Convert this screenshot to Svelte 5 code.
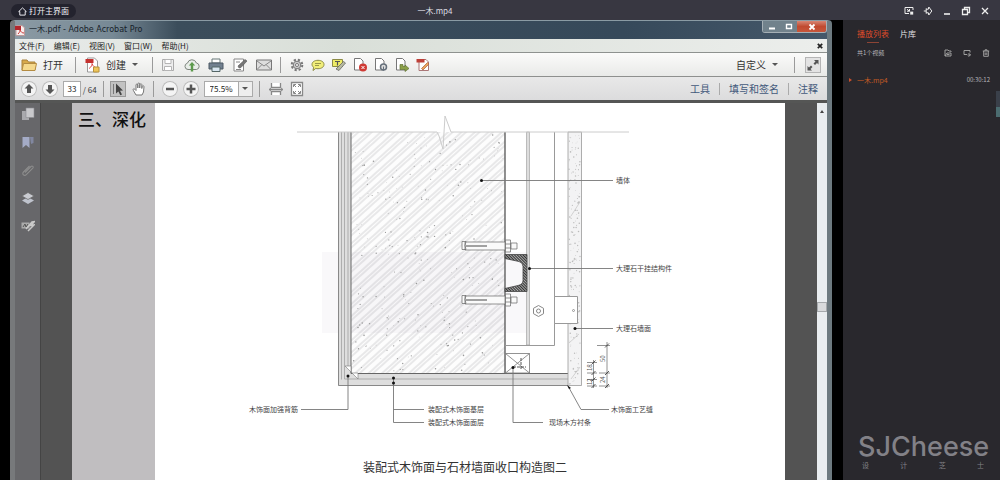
<!--
  Video player playing a recorded PDF walkthrough, with the playlist on the right
-->

<script lang="ts">
  const menus = ['文件(F)', '编辑(E)', '视图(V)', '窗口(W)', '帮助(H)'];

  let pageNumber = '33';
  let zoomLevel = '75.5%';

  // Repeatable noise for the concrete and stone fills
  function speckle(count: number, x: number, y: number, w: number, h: number, start: number) {
    let seed = start;
    const next = () => {
      seed = (seed * 16807) % 2147483647;
      return seed / 2147483647;
    };
    return Array.from({ length: count }, () => ({
      x: x + next() * w,
      y: y + next() * h,
      r: 0.3 + next() * 0.5
    }));
  }

  const wallDots = speckle(260, 353, 134, 150, 237, 4711);
  const stoneDots = speckle(170, 569, 134, 11, 250, 977);
  const bolts = [0, 54];

  const labels = [
    { x: 616, y: 183, text: '墙体' },
    { x: 616, y: 271, text: '大理石干挂结构件' },
    { x: 616, y: 331, text: '大理石墙面' },
    { x: 249, y: 412, text: '木饰面加强背筋' },
    { x: 428, y: 412, text: '装配式木饰面基层' },
    { x: 428, y: 425, text: '装配式木饰面面层' },
    { x: 549, y: 425, text: '现场木方衬条' },
    { x: 611, y: 412, text: '木饰面工艺缝' }
  ];
</script>

<div class="player">
  <header class="topbar">
    <div class="topbar-main">
      <button class="home-btn">
        <svg width="9" height="9" viewBox="0 0 9 9"><path d="M.7 4.6 4.5.9l3.8 3.7H7.2v3.5H1.8V4.6z" fill="none" stroke="#e8e8ee" /></svg>
        打开主界面
      </button>
      <span class="video-title">一木.mp4</span>
    </div>
    <div class="topbar-actions">
      <button aria-label="Mini player">
        <svg viewBox="0 0 10 10"><path d="M9 4V1.5H1v6h4M3 3.2l2.4 2M5.5 3v2.2H3" /><path d="M6.2 5.6h3v3h-3z" fill="#eee" stroke="none" /></svg>
      </button>
      <button aria-label="Pin">
        <svg viewBox="0 0 10 10"><path d="M.8 5h2.400M3.200 2.400v5.200M3.200 3.200h2.200L5.800 1l3 4-3 4-.4-2.200H3.200" /></svg>
      </button>
      <button aria-label="Minimize">
        <svg viewBox="0 0 10 10"><path d="M2 8h6" stroke-width="1.6" /></svg>
      </button>
      <button aria-label="Restore">
        <svg viewBox="0 0 10 10"><path d="M1.5 3.5h5v5h-5zM3.5 3V1.5h5v5H7" stroke-width="1.3" /></svg>
      </button>
      <button aria-label="Close">
        <svg viewBox="0 0 10 10"><path d="m2 2 6 6M8 2 2 8" stroke-width="1.3" /></svg>
      </button>
    </div>
  </header>

  <div class="content">
    <main class="stage">
      <div class="window">
        <div class="titlebar">
          <svg width="10" height="11" viewBox="0 0 10 11"><path d="M1 .5h6l2.5 2.3v7.7H1z" fill="#f7eeee" stroke="#b99" /><path d="M0 1h6v4H0z" fill="#b3262c" /><path d="M3 9c2-2 2-3 2-4 1 2 2 3 4 3" fill="none" stroke="#c33" /></svg>
          <span class="titlebar-text">一木.pdf - Adobe Acrobat Pro</span>
          <div class="window-btns">
            <button class="win-min" aria-label="Minimize window"><svg width="8" height="8" viewBox="0 0 8 8"><path d="M1 5.5h6" stroke="#fff" stroke-width="2" /></svg></button>
            <button class="win-max" aria-label="Maximize window"><svg width="8" height="8" viewBox="0 0 8 8"><path d="M1.5 1.5h5v4h-5z" fill="none" stroke="#fff" stroke-width="1.4" /></svg></button>
            <button class="win-close" aria-label="Close window"><svg width="8" height="8" viewBox="0 0 8 8"><path d="m1.5 1.5 5 5m0-5-5 5" stroke="#fff" stroke-width="1.8" /></svg></button>
          </div>
        </div>

        <nav class="menubar">
          {#each menus as menu}
            <button>{menu}</button>
          {/each}
          <button class="doc-close" aria-label="Close document"><svg width="6" height="6" viewBox="0 0 6 6"><path d="m.8.8 4.4 4.4m0-4.4L.8 5.2" stroke="#222" stroke-width="1.7" /></svg></button>
        </nav>

        <!-- File tools -->
        <div class="toolbar">
          <div class="group open-group">
            <button class="text-btn">
              <svg width="16" height="14" viewBox="0 0 16 14"><path d="M1 12V2h5l1.5 2H14v8z" fill="#d7a94a" stroke="#a9823b" /><path d="m1 12.5 1.5-7h13l-1.5 7z" fill="#f5d98c" stroke="#b48c42" /></svg>
              打开
            </button>
          </div>
          <div class="group create-group">
            <button class="text-btn">
              <svg width="15" height="15" viewBox="0 0 15 15"><path d="M2.5.5h7l3 3v11h-10z" fill="#fff" stroke="#999" /><path d="M.5 1.5h8v4h-8z" fill="#c5322f" /><path d="M4 11c3-2 3-4 3-5 1 3 3 4 4 4" fill="none" stroke="#d44" /><path d="M8.5 9.5H14v5H8.500z" fill="#eec65a" stroke="#b8923b" /></svg>
              创建
              <span class="caret"></span>
            </button>
          </div>
          <div class="group file-group">
            <button aria-label="Save"><svg viewBox="0 0 16 16"><path d="M2.5 2.5h11v11h-11z" fill="#eee" stroke="#aaa" /><path d="M5 2.5h6v4H5zM4.5 9.5h7v4h-7z" fill="#fff" stroke="#b5b5b5" /></svg></button>
            <button aria-label="Upload"><svg viewBox="0 0 16 16"><path d="M4 12.5a3.2 3.2 0 0 1-.6-6.300 4.700 4.700 0 0 1 9-.2 3.300 3.300 0 0 1 .1 6.500z" fill="#e8ede8" stroke="#7d857d" /><path d="M8 5 4.8 8.5h2v6h2.400v-6h2z" fill="#5c9a4c" /></svg></button>
            <button aria-label="Print"><svg viewBox="0 0 16 16"><path d="M4 2h8v4H4z" fill="#fff" stroke="#677" /><path d="M1 6h14v6H1z" fill="#71808f" stroke="#4d5965" /><path d="M4 10h8v4.5H4z" fill="#d9e6f0" stroke="#566" /></svg></button>
            <button aria-label="Sign"><svg viewBox="0 0 16 16"><path d="M2 2h9.5v12H2z" fill="#fff" stroke="#888" /><path d="m6 9 1 2 2-.5L15 4l-2-1.500z" fill="#777" stroke="#555" stroke-width=".6" /><path d="M4 12.5h5M4 5h4" stroke="#888" /></svg></button>
            <button aria-label="Mail"><svg viewBox="0 0 16 16"><path d="M.5 3h15v10H.5z" fill="#ddd" stroke="#777" /><path d="m1 4 7 5 7-5M1 12.5l5-5m9 5-5-5" fill="none" stroke="#888" /></svg></button>
          </div>
          <div class="group edit-group">
            <button aria-label="Settings"><svg viewBox="0 0 16 16"><circle cx="8" cy="8" r="5.3" fill="none" stroke="#777" stroke-width="2" stroke-dasharray="2.2 2" /><circle cx="8" cy="8" r="3.8" fill="#ccc" stroke="#777" /><circle cx="8" cy="8" r="1.5" fill="#fff" stroke="#777" /></svg></button>
            <button aria-label="Comment"><svg viewBox="0 0 16 16"><path d="M8 3.300c3.500 0 6 1.700 6 4.200s-2.500 4.200-6 4.200c-.8 0-1.500 0-2.200-.3L3 13.500l.6-3.200C2.500 9.500 2 8.500 2 7.500c0-2.500 2.500-4.200 6-4.200z" fill="#f1ee79" stroke="#8b8a45" /><path d="M5 6.5h6M5 8.5h4" stroke="#9a984a" /></svg></button>
            <button aria-label="Highlight"><svg viewBox="0 0 16 16"><path d="M1.5 2.5h10v7h-10z" fill="#eeeb66" stroke="#8b8a45" /><path d="M4 4.5h5M6.5 4.5v4" stroke="#555" stroke-width="1.2" /><path d="m5 12 3 1.5L14.500 6l-2-1.500z" fill="#b8bba0" stroke="#666" stroke-width=".8" /></svg></button>
            <button aria-label="Delete page"><svg viewBox="0 0 16 16"><path d="M2.5 1.5h6L11 4v9H2.500z" fill="#fff" stroke="#777" /><circle cx="11" cy="10.5" r="4" fill="#cf3a34" /><path d="m9.5 9 3 3m0-3-3 3" stroke="#fff" /></svg></button>
            <button aria-label="Rotate page"><svg viewBox="0 0 16 16"><path d="M2.5 1.5h6L11 4v9H2.500z" fill="#fff" stroke="#777" /><circle cx="10.5" cy="10" r="3" fill="#ddd" stroke="#66717c" stroke-width="1.5" /><path d="M10.5 9.5v4" stroke="#66717c" /></svg></button>
            <button aria-label="Extract page"><svg viewBox="0 0 16 16"><path d="M2.5 1.5h6L11 4v9H2.500z" fill="#fff" stroke="#777" /><path d="M6 7.5h3v2h2V8l4 3.500-4 3v-2H6z" fill="#8a9f48" stroke="#627334" stroke-width=".7" /></svg></button>
            <button aria-label="Edit PDF"><svg viewBox="0 0 16 16"><path d="M4 2.5h7L13.500 5v8.500H4z" fill="#fff" stroke="#a77" /><path d="M1.5 2h8v3.500h-8z" fill="#be4038" /><path d="m6.500 11.500 6-6L14 7l-6 6z" fill="#eba35b" stroke="#a65d3c" stroke-width=".7" /></svg></button>
          </div>
          <div class="group custom-group">
            <button class="text-btn">自定义 <span class="caret"></span></button>
          </div>
          <button class="expand-btn" aria-label="Expand"><svg width="14" height="14" viewBox="0 0 14 14"><path d="M8 2h4.500v4.500L11 5 9 7 7.500 5.500l2-2zM6 12.500H1.500V8L3 9.500l2-2L6.500 9l-2 2z" fill="#555" /></svg></button>
        </div>

        <!-- Page tools -->
        <div class="toolbar page-tools">
          <div class="group pager-group">
            <button class="round" aria-label="Previous page"><svg viewBox="0 0 16 16"><path d="m8 3 4.500 4.500H10V12H6V7.500H3.500z" fill="#555" /></svg></button>
            <button class="round" aria-label="Next page"><svg viewBox="0 0 16 16"><path d="m8 13 4.500-4.500H10V4H6v4.500H3.500z" fill="#555" /></svg></button>
            <label class="pager"><input bind:value={pageNumber} aria-label="Page" /> / 64</label>
          </div>
          <div class="group cursor-group">
            <button class="selected" aria-label="Select"><svg viewBox="0 0 16 16"><path d="M3.5 3v10" stroke="#777" /><path d="m6 2.500 7 7-3 .2 2 3.800-1.700.8-1.900-3.800L6 12.500z" fill="#444" /></svg></button>
            <button aria-label="Hand"><svg viewBox="0 0 16 16"><path d="M5 14 2.300 9.300C1.500 8 3 7.300 4 8.500l1 1V4c0-1.300 1.800-1.300 1.800 0v3-4c0-1.300 1.900-1.300 1.900 0v4l.3-3.300c.1-1.300 1.900-1.200 1.800 0V7.500l.4-2c.3-1.200 2-.9 1.800.3L12.500 11 11 14z" fill="#fff" stroke="#777" /></svg></button>
          </div>
          <div class="group zoom-group">
            <button class="round" aria-label="Zoom out"><svg viewBox="0 0 16 16"><path d="M4 8h8" stroke="#555" stroke-width="2.5" /></svg></button>
            <button class="round" aria-label="Zoom in"><svg viewBox="0 0 16 16"><path d="M3.5 8h9M8 3.5v9" stroke="#555" stroke-width="2.5" /></svg></button>
            <div class="zoom-box">
              <select bind:value={zoomLevel} aria-label="Zoom level">
                <option>75.5%</option>
                <option>100%</option>
              </select>
              <span class="zoom-arrow"><span class="caret"></span></span>
            </div>
          </div>
          <div class="group fit-group">
            <button aria-label="Fit width"><svg viewBox="0 0 16 16"><path d="M3.5 2v4.500h9V2M3.500 14v-3.500h9V14" fill="#fff" stroke="#888" stroke-width="1.3" /><path d="M1 8.5h14M3 7 1 8.500 3 10m10-3 2 1.500-2 1.500" fill="none" stroke="#888" /></svg></button>
            <button aria-label="Fit page"><svg viewBox="0 0 16 16"><path d="M2.5 1.5h11v13h-11z" fill="#fff" stroke="#888" stroke-width="1.3" /><path d="M4.5 6V3.500H7M9 3.500h2.500V6M11.500 10v2.500H9M7 12.500H4.500V10M5 4l2 2m4-2L9 6m2 6-2-2m-4 2 2-2" fill="none" stroke="#888" /></svg></button>
          </div>
          <div class="panels">
            <button>工具</button>
            <button>填写和签名</button>
            <button>注释</button>
          </div>
        </div>

        <div class="document">
          <div class="navpane">
            <button aria-label="Thumbnails"><svg viewBox="0 0 14 14"><path d="M1 4h7v9H1z" fill="#a9a9ad" /><path d="M5 1h8v9.500H5z" fill="#c9c9cc" stroke="#8c8c90" stroke-width=".6" /></svg></button>
            <button aria-label="Bookmarks"><svg viewBox="0 0 14 14"><path d="M1.5 2h7v11L5 10l-3.500 3z" fill="#a4abc6" /><path d="M9 2h3.500v6L10 9z" fill="#8187a0" /></svg></button>
            <button aria-label="Attachments"><svg viewBox="0 0 14 14"><path d="M4 9.500 10 3.500c1.200-1.200 3 .3 1.800 1.600l-6.500 6.500c-2 2-4.800-.6-2.800-2.600L8.500 3" fill="none" stroke="#8d8d8d" stroke-width="1.1" /></svg></button>
            <button aria-label="Layers"><svg viewBox="0 0 14 14"><path d="m7 6 6 3.500-6 3.500-6-3.500z" fill="#bfc3cd" /><path d="m7 1.500 6 3.500-6 3.500L1 5z" fill="#c9cbd1" stroke="#666" stroke-width=".7" /></svg></button>
            <button aria-label="Signatures"><svg viewBox="0 0 14 14"><path d="M.5 3.500h8v6h-8z" fill="#aaa" /><path d="m5 10 6-7 2.500-.5L10 6.500l3-.5-6 6" fill="none" stroke="#c9c9c9" stroke-width="1.5" /><path d="m2 8 2-3 1 3 2-3" fill="none" stroke="#555" /></svg></button>
          </div>
          <article class="page">
            <h1>三、深化</h1>
            <svg class="drawing" viewBox="155 103 630 377">
              <defs>
                <pattern id="hatch" width="9" height="9" patternUnits="userSpaceOnUse" patternTransform="rotate(-42)">
                  <path d="M0 2h9M0 5h9" stroke="#c9c9cc" stroke-width=".8" />
                </pattern>
                <pattern id="steel" width="2" height="2" patternUnits="userSpaceOnUse" patternTransform="rotate(45)">
                  <path fill="#aaa" d="M0 0h2v2H0z" /><path d="M0 .5h2" stroke="#333" />
                </pattern>
              </defs>

              <!-- Concrete wall -->
              <path d="M351 132h154v241H351z" fill="#fdfdfd" />
              <path d="M351 132h154v241H351z" fill="url(#hatch)" />
              <path d="M322 252h208v81H322z" fill="#8b6f9b" opacity=".05" />
              {#each wallDots as dot}
                <circle cx={dot.x} cy={dot.y} r={dot.r} fill="#999" />
              {/each}

              <!-- Wood panel layers -->
              <path d="M338 132h13v241h217v13H338z" fill="#dedede" />
              <g class="line">
                <path d="M338.5 132v253.500H568" stroke="#888" />
                <path d="M341.5 132v247.500M344.500 132v247H568M348 132v236" stroke="#999" stroke-width=".7" />
                <path d="M351 132v241.500h217" stroke="#666" />
                <path d="M505 132v241" stroke="#555" stroke-width="1.3" />
              </g>
              <path d="m345 366 13 13v-6h-7v-7z" fill="#fff" stroke="#777" stroke-width=".6" />

              <!-- Frame, cavity and stone slab -->
              <path d="M526.5 132h3v213h-3z" fill="#ddd" stroke="#999" stroke-width=".6" />
              <path d="M505 345.5h49.500V132" class="line" stroke="#999" />
              <path d="M568 132h13.500v253.500H568z" fill="#f3f3f4" stroke="#999" stroke-width=".8" />
              {#each stoneDots as dot}
                <circle cx={dot.x} cy={dot.y} r={dot.r} fill="#bbb" />
              {/each}
              <path d="m571 216 9-14m-11 141 10-9m-8 45 9-12" class="line" stroke="#bbb" stroke-width=".6" />

              <!-- Break line -->
              <path d="M297 132h140l2 4 4 13 2-33 6 16h178" class="line" stroke="#ccc" />

              <!-- Anchor bolts -->
              {#each bolts as offset}
                <g transform="translate(0 {offset})" fill="#fafafa" stroke="#666" stroke-width=".7">
                  <path d="M465 242h40v8h-40zM462 241.500h4l-1 4 1 4h-4z" />
                  <path d="M466 246h21" stroke-width="1.2" />
                  <path d="M511 243h6v6h-6zM505.500 240h5v12h-5zM505.500 244h5m-5 4h5" />
                </g>
              {/each}

              <!-- Steel channel -->
              <path d="M505 254.500h22v37h-22v-3l13-3q5-1 5-5v-14q0-4-4-5l-14-3z" fill="url(#steel)" stroke="#444" stroke-width=".8" />

              <path d="m538.5 305.500 5 2.800v5.400l-5 2.800-5-2.800v-5.400z" class="line" stroke="#888" />
              <circle cx="538.5" cy="311" r="2" class="line" stroke="#888" />
              <path d="M554.5 296.500h23v27h-23z" fill="#fff" stroke="#999" />
              <circle cx="573.5" cy="310.5" r="1" class="line" stroke="#777" stroke-width=".7" />

              <!-- Timber batten -->
              <path d="M505.5 353.500h24v19.500h-24zl24 19.500m0-19.500-24 19.500" fill="#fff" stroke="#777" stroke-width=".8" />
              <path d="M521 358v12m-8-3h13" class="line" stroke="#555" stroke-dasharray="3 1" />

              <!-- Leaders -->
              <g class="line" stroke="#777" stroke-width=".9">
                <path d="M481 180.500h132M529 268.500h84M575 328.500h38" />
                <path d="M348 376v33.500h-47M393.500 378v44.500H424M393.500 409.500H424M513 367v55.500h30M568 386l13 23.500h28" />
              </g>
              <g fill="#111">
                <circle cx="481.5" cy="180.5" r="1.5" />
                <circle cx="529.5" cy="268.5" r="1.5" />
                <circle cx="575" cy="328.5" r="1.5" />
                <circle cx="348" cy="376" r="1.5" />
                <circle cx="393.5" cy="378" r="1.5" />
                <circle cx="393.5" cy="383" r="1.5" />
                <circle cx="513" cy="367.5" r="1.5" />
                <path d="m567 385 4 3-2 1z" />
              </g>

              <!-- Dimensions -->
              <g class="line" stroke="#777" stroke-width=".8">
                <path d="M607 342v46M597 345.500h13M599 373h11M599 386h11M593.500 360v28M587 362.500h10M587 373h10M587 379.500h10M587 386h10" />
                <path d="m605 347.500 4-4m-4 31.500 4-4m-4 17 4-4m-17.500-19.500 4-4m-4 14.500 4-4m-4 10.500 4-4m-4 10.500 4-4" stroke="#333" />
              </g>
              <g class="dim">
                <text transform="translate(605 362) rotate(-90)">50</text>
                <text transform="translate(605 383) rotate(-90)">24</text>
                <text transform="translate(592 371) rotate(-90)">18</text>
                <text transform="translate(592 385) rotate(-90)">12</text>
              </g>

              {#each labels as label}
                <text class="label" x={label.x} y={label.y}>{label.text}</text>
              {/each}
              <text class="caption" x="363" y="472">装配式木饰面与石材墙面收口构造图二</text>
            </svg>
          </article>
          <div class="scrollbar">
            <span class="scroll-up"></span>
            <span class="scroll-thumb"></span>
          </div>
        </div>
      </div>
    </main>

    <aside class="playlist">
      <div class="tabs">
        <button class="tab active">播放列表</button>
        <button class="tab">片库</button>
      </div>
      <div class="summary">
        <span>共1个视频</span>
        <div class="summary-actions">
          <button aria-label="Add file"><svg viewBox="0 0 8 8"><path d="M1 7V1h3l1 1h2v1M1 7h6V4H3z" /><path d="M3 5.5h2.500" /></svg></button>
          <button aria-label="Play order"><svg viewBox="0 0 8 8"><path d="M7 3.500V1.500H1v4h3M5.500 4l2 2-2 1.500M4.500 6h3" /></svg></button>
          <button aria-label="Clear"><svg viewBox="0 0 8 8"><path d="M.8 2h6.400M3 2V.8h2V2M1.700 2v5.300h4.600V2M3.200 3.500v2.500m1.600-2.500v2.500" /></svg></button>
        </div>
      </div>
      <button class="track">
        <span class="track-arrow"></span>
        <span class="track-name">一木.mp4</span>
        <span class="track-time">00:30:12</span>
      </button>
      <span class="edge-handle"></span>
      <div class="brand">
        <strong>SJCheese</strong>
        <div class="brand-sub"><span>设</span><span>计</span><span>芝</span><span>士</span></div>
      </div>
    </aside>
  </div>
</div>

<style>
  :global(body) {
    background: #000;
  }

  .player {
    display: flex;
    flex-direction: column;
    height: 100vh;
    overflow: hidden;
    font-family: "Noto Sans CJK SC", sans-serif;
    font-size: 8px;
    line-height: 12px;
  }

  button {
    margin: 0;
    padding: 0;
    border: none;
    background: none;
    color: inherit;
    font: inherit;
    white-space: nowrap;
    cursor: pointer;
  }

  svg {
    display: block;
    flex: none;
  }

  .line {
    fill: none;
  }

  /* Player top bar */
  .topbar {
    display: grid;
    grid-template-columns: 1fr 130px;
    flex: none;
    height: 20px;
    background: #383741;
    color: #dddde2;
  }

  .topbar-main {
    display: grid;
    grid-template-columns: 1fr auto 1fr;
    align-items: center;
    padding-top: 2px;
  }

  .home-btn {
    display: flex;
    align-items: center;
    justify-self: start;
    gap: 2px;
    height: 14px;
    margin-left: 11px;
    padding: 0 7px;
    border-radius: 7px;
    background: #23232e;
    color: #f0f0f4;
  }

  .video-title {
    font-size: 8px;
  }

  .topbar-actions {
    display: flex;
    align-items: center;
    justify-content: flex-end;
    gap: 9px;
    padding: 1px 10px 0 0;
  }

  .topbar-actions svg {
    width: 10px;
    height: 10px;
    fill: none;
    stroke: #eee;
  }

  .content {
    display: grid;
    grid-template-columns: 1fr 157px;
    flex: 1;
    min-height: 0;
  }

  .stage {
    display: flex;
    min-width: 0;
    min-height: 0;
    padding: 0 11px 0 10px;
    background: #000;
  }

  /* Acrobat window */
  .window {
    display: flex;
    flex-direction: column;
    flex: 1;
    min-width: 0;
    border-top: 1px solid #8a9ba4;
    border-right: 5px solid #6d7a80;
    border-left: 5px solid #77797b;
    border-radius: 4px 4px 0 0;
    background: #535353;
    overflow: hidden;
  }

  .titlebar {
    display: flex;
    align-items: center;
    flex: none;
    gap: 4px;
    height: 18px;
    background: linear-gradient(90deg, #8b9aa4, #778995 12%, #3b4d5b 20%, #36495a 75%, #45586a);
    color: #16212a;
    font-family: "DejaVu Sans", "Noto Sans CJK SC", sans-serif;
  }

  .window-btns {
    display: flex;
    align-self: flex-start;
    margin-left: auto;
    border: 1px solid #a6b0b6;
    border-top: none;
    border-radius: 0 0 3px 3px;
    overflow: hidden;
  }

  .window-btns button {
    display: flex;
    align-items: center;
    justify-content: center;
    width: 17px;
    height: 11px;
    background: #71828c;
  }

  .window-btns .win-close {
    width: 29px;
    background: linear-gradient(#d78674, #c04a30 50%, #c8563a);
  }

  .menubar {
    display: flex;
    align-items: center;
    flex: none;
    gap: 9px;
    height: 13px;
    padding: 0 4px;
    border-bottom: 1px solid #8e928f;
    background: linear-gradient(90deg, #e8ebe9, #d9dfd8 40%, #eceeec);
    color: #222;
  }

  .doc-close {
    margin-left: auto;
  }

  .toolbar {
    display: flex;
    align-items: center;
    flex: none;
    height: 23px;
    border-bottom: 1px solid #8e908e;
    background: linear-gradient(#fbfbfa, #e9eae8);
    color: #333;
  }

  .page-tools {
    border-bottom: 3px solid #555655;
    background: linear-gradient(#e8e8e8, #dcdcdd);
  }

  .group {
    display: flex;
    align-items: center;
    flex: none;
    height: 16px;
    border-right: 1px solid #9a9a9a;
  }

  .group svg {
    height: 16px;
  }

  .group > button:not(.text-btn) svg {
    width: 16px;
  }

  .text-btn {
    display: flex;
    align-items: center;
    gap: 6px;
    font-size: 10px;
  }

  .caret {
    border: 3px solid transparent;
    border-top-color: #555;
    border-bottom: none;
  }

  .open-group {
    padding: 0 12px 0 6px;
  }

  .create-group {
    padding: 0 14px 0 9px;
  }

  .file-group {
    gap: 8px;
    padding: 0 8px 0 7px;
  }

  .edit-group {
    gap: 5px;
    padding: 0 8px;
    border-right: none;
  }

  .custom-group {
    margin-left: auto;
    padding-right: 16px;
  }

  .expand-btn {
    margin: 0 6px 0 10px;
    border: 1px solid #b5b5b5;
    background: #e3e3e3;
  }

  .pager-group,
  .cursor-group,
  .zoom-group,
  .fit-group {
    gap: 5px;
    padding: 0 6px;
  }

  .fit-group {
    padding-left: 8px;
    border-right: none;
  }

  .zoom-group {
    padding-left: 8px;
  }

  .round {
    border-radius: 50%;
    background: #f4f4f4;
    box-shadow: 0 0 0 1px #bbb inset;
  }

  .selected {
    background: #c2c2c2;
    box-shadow: 0 0 0 1px #999 inset;
  }

  .pager {
    font-size: 8px;
  }

  .pager input {
    box-sizing: border-box;
    width: 18px;
    height: 16px;
    margin: 0;
    padding: 0;
    border: 1px solid #aaa;
    background: #fff;
    color: #222;
    font: inherit;
    text-align: center;
  }

  .zoom-box {
    display: flex;
    height: 16px;
    border: 1px solid #aaa;
    box-sizing: border-box;
    background: #fff;
  }

  .zoom-box select {
    width: 33px;
    padding: 0 0 0 5px;
    border: none;
    background: #fff;
    color: #222;
    font: inherit;
    appearance: none;
  }

  .zoom-arrow {
    display: flex;
    align-items: center;
    justify-content: center;
    width: 13px;
    border-left: 1px solid #aaa;
    background: #eee;
  }

  .panels {
    display: flex;
    margin-left: auto;
    color: #43597b;
    font-size: 10px;
  }

  .panels button {
    padding: 0 9px;
  }

  .panels button + button {
    border-left: 1px solid #aaa;
  }

  /* Document area */
  .document {
    display: flex;
    flex: 1;
    min-height: 0;
  }

  .navpane {
    display: flex;
    flex-direction: column;
    align-items: center;
    flex: none;
    gap: 14px;
    width: 25px;
    padding-top: 4px;
    border-right: 1px solid #444;
    background: #67676a;
  }

  .navpane svg {
    width: 14px;
    height: 14px;
  }

  .page {
    display: flex;
    flex: 1;
    align-items: stretch;
    min-width: 0;
    margin: 0 32px 0 31px;
    background: #fff;
    overflow: hidden;
  }

  .page h1 {
    flex: none;
    box-sizing: border-box;
    width: 83px;
    margin: 0;
    padding: 4px 0 0 6px;
    background: #c0bec0;
    color: #111;
    font-size: 17px;
    font-weight: 500;
    line-height: 24px;
    white-space: nowrap;
  }

  .drawing {
    flex: 1;
    align-self: flex-start;
    min-width: 0;
  }

  .label {
    fill: #444;
    font-size: 7px;
  }

  .dim {
    fill: #555;
    font-size: 6px;
  }

  .caption {
    fill: #333;
    font-size: 12px;
  }

  .scrollbar {
    display: flex;
    flex-direction: column;
    align-items: center;
    flex: none;
    width: 10px;
    background: #e9edf0;
  }

  .scroll-up {
    margin-top: 7px;
    border: 2px solid transparent;
    border-top: none;
    border-bottom: 3px solid #444;
  }

  .scroll-thumb {
    box-sizing: border-box;
    width: 10px;
    height: 10px;
    margin-top: 189px;
    border: 1px solid #a5a9ac;
    background: #d8dadc;
  }

  /* Playlist */
  .playlist {
    display: flex;
    flex-direction: column;
    position: relative;
    min-height: 0;
    background: #29282d;
    color: #b5b5b9;
  }

  .tabs {
    display: flex;
    gap: 11px;
    padding: 8px 14px 0;
  }

  .tab {
    position: relative;
    color: #e2e2e5;
  }

  .tab.active {
    color: #dd4a2a;
  }

  .tab.active::after {
    content: "";
    position: absolute;
    bottom: -3px;
    left: 10px;
    width: 12px;
    height: 1px;
    background: #8d4435;
  }

  .summary {
    display: flex;
    align-items: center;
    justify-content: space-between;
    margin-top: 7px;
    padding: 0 10px 0 14px;
    font-size: 6px;
  }

  .summary-actions {
    display: flex;
    gap: 11px;
  }

  .summary-actions svg {
    width: 8px;
    height: 8px;
    fill: none;
    stroke: #aaa;
    stroke-width: .9;
  }

  .track {
    display: flex;
    align-items: center;
    margin-top: 15px;
    padding: 0 10px 0 6px;
  }

  .track-arrow {
    margin-right: 5px;
    border: 2px solid transparent;
    border-right: none;
    border-left: 3px solid #c9502d;
  }

  .track-name {
    color: #c25a24;
    font-size: 7px;
  }

  .track-time {
    margin-left: auto;
    font-size: 6px;
  }

  .edge-handle {
    position: absolute;
    top: 71px;
    right: 0;
    box-sizing: border-box;
    width: 4px;
    height: 26px;
    border-bottom: 10px solid #4b6c70;
    background: #3a404a;
  }

  .brand {
    margin-top: auto;
    padding: 0 12px 9px 15px;
    color: #828187;
  }

  .brand strong {
    display: block;
    font-family: Inter, sans-serif;
    font-size: 27px;
    font-weight: 500;
    line-height: 24px;
  }

  .brand-sub {
    display: flex;
    justify-content: space-between;
    padding: 0 4px;
    font-size: 7px;
  }
</style>
